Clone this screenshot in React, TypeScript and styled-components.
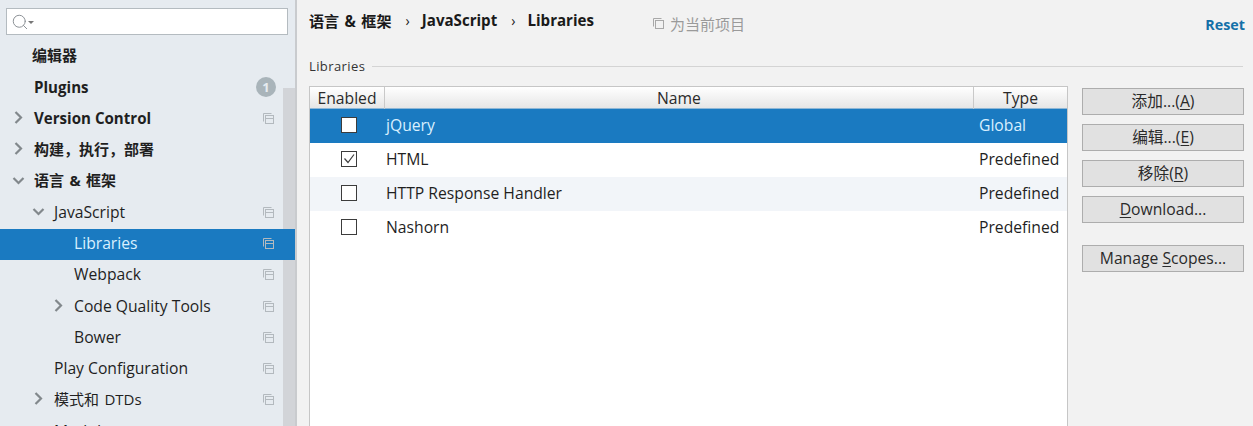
import React from 'react';
import styled, { createGlobalStyle } from 'styled-components';
import { Search } from 'lucide-react';

const GlobalStyle = createGlobalStyle`
  html, body {
    margin: 0;
    padding: 0;
    height: 100%;
    overflow: hidden;
  }
  body {
    font-family: "Open Sans", "Noto Sans", "Noto Sans CJK SC", sans-serif;
    font-size: 15.7px;
    color: #1a1a1a;
  }
`;

const Page = styled.div`
  display: flex;
  width: 1253px;
  height: 426px;
  overflow: hidden;
  background: #f2f2f2;
`;

const Sidebar = styled.aside`
  position: relative;
  width: 295px;
  flex: none;
  height: 426px;
  overflow: hidden;
  background: #e6ebf0;
  border-right: 2px solid #c9cbce;
`;

const SearchBox = styled.div`
  display: flex;
  align-items: center;
  box-sizing: border-box;
  width: 282px;
  height: 27px;
  margin: 8px 0 6px 6px;
  padding-left: 4px;
  background: #fff;
  border: 1px solid #b4bbc0;
  color: #8a8f94;
`;

const Caret = styled.span`
  width: 0;
  height: 0;
  margin-left: -1px;
  margin-top: 2px;
  border-left: 3px solid transparent;
  border-right: 3px solid transparent;
  border-top: 3px solid #777;
`;

const Tree = styled.div`
  display: grid;
  grid-auto-rows: 31.25px;
`;

const TreeRow = styled.div<{ $depth: number; $selected?: boolean }>`
  position: relative;
  box-sizing: border-box;
  display: flex;
  align-items: center;
  padding-left: ${p => 34 + p.$depth * 20}px;
  padding-bottom: 2px;
  background: ${p => (p.$selected ? '#1a7ac1' : 'transparent')};
  color: ${p => (p.$selected ? '#d9f0ff' : '#1f1f1f')};
  z-index: ${p => (p.$selected ? 2 : 1)};
`;

const TreeLabel = styled.span<{ $bold?: boolean; $cjk?: boolean; $outdent?: number }>`
  margin-left: ${p => -(p.$outdent ?? 0)}px;
  margin-bottom: ${p => (p.$cjk ? 2 : 0)}px;
  font-weight: ${p => (p.$bold ? 700 : 400)};
  font-size: ${p => (p.$cjk ? '15px' : p.$bold ? '15.1px' : 'inherit')};
  word-spacing: ${p => (p.$cjk ? '1.5px' : 'normal')};
  color: inherit;
  white-space: nowrap;
`;

const Arrow = styled.svg<{ $depth: number }>`
  position: absolute;
  left: ${p => 12 + p.$depth * 20}px;
  top: 50%;
  width: 13px;
  height: 13px;
  margin-top: -8px;
  fill: none;
  stroke: #82888c;
  stroke-width: 2.2;
`;

const CopyMark = styled.svg`
  position: absolute;
  right: 21px;
  top: 50%;
  width: 11px;
  height: 11px;
  margin-top: -6px;
  fill: none;
  stroke: #b3b9be;
  stroke-width: 1;
`;

const Badge = styled.span`
  position: absolute;
  right: 19px;
  top: 50%;
  display: flex;
  align-items: center;
  justify-content: center;
  width: 20px;
  height: 20px;
  margin-top: -11px;
  border-radius: 50%;
  background: #a9b4ba;
  color: #e6ebf0;
  font-size: 13px;
  font-weight: 700;
`;

const ScrollTrack = styled.div`
  position: absolute;
  right: 0;
  top: 88px;
  bottom: 0;
  width: 12px;
  background: #d2d4d8;
`;

const Main = styled.main`
  flex: 1;
  min-width: 0;
  display: flex;
  flex-direction: column;
  padding: 0 8px 0 12px;
`;

const TopBar = styled.div`
  display: flex;
  align-items: flex-start;
  height: 57px;
  flex: none;
`;

const Crumbs = styled.div`
  display: flex;
  align-items: center;
  width: 344px;
  height: 40px;
  font-size: 15.1px;
  font-weight: 700;
  word-spacing: 1.5px;
  color: #1a1a1a;
`;

const CrumbSep = styled.span`
  margin: 0 12px 0 14px;
  font-weight: 400;
  font-size: 14px;
`;

const ProjectHint = styled.div`
  display: flex;
  align-items: center;
  gap: 6px;
  height: 47px;
  font-size: 15px;
  color: #9a9a9a;
`;

const HintMark = styled.svg`
  width: 11px;
  height: 11px;
  fill: none;
  stroke: #a8a8a8;
`;

const ResetLink = styled.a`
  margin-left: auto;
  line-height: 50px;
  font-size: 14.3px;
  font-weight: 700;
  color: #1470a8;
`;

const SectionTitle = styled.div`
  display: flex;
  align-items: center;
  gap: 7px;
  height: 18px;
  margin-bottom: 11px;
  margin-right: 2px;
  flex: none;
  font-size: 13px;
  letter-spacing: 0.4px;
  color: #333;

  &::after {
    content: '';
    flex: 1;
    height: 1px;
    background: #d4d4d4;
  }
`;

const Content = styled.div`
  flex: 1;
  min-height: 0;
  display: flex;
  gap: 14px;
`;

const TablePanel = styled.div`
  box-sizing: border-box;
  width: 759px;
  flex: none;
  background: #fff;
  border: 1px solid #c6c6c6;
  border-bottom: none;
`;

const Columns = styled.div`
  display: grid;
  grid-template-columns: 75px 589px 1fr;
`;

const HeaderRow = styled(Columns)`
  box-sizing: border-box;
  height: 22px;
  background: linear-gradient(#ffffff, #e6e6e6);
  border-bottom: 1px solid #8fb7d6;
`;

const HeaderCell = styled.div<{ $last?: boolean }>`
  position: relative;
  text-align: center;
  line-height: 22px;
  color: #2a2a2a;
  border-right: ${p => (p.$last ? 'none' : '1px solid #c9c9c9')};
`;

const BodyRow = styled(Columns)<{ $selected?: boolean; $striped?: boolean }>`
  box-sizing: border-box;
  height: 34px;
  padding-bottom: 2px;
  align-items: center;
  background: ${p => (p.$selected ? '#1a7ac1' : p.$striped ? '#f2f5f9' : '#fff')};
  color: ${p => (p.$selected ? '#d9f0ff' : '#1f1f1f')};
`;

const CheckCell = styled.div`
  display: flex;
  justify-content: center;
  padding-left: 3px;
`;

const CheckBox = styled.span`
  display: flex;
  box-sizing: border-box;
  width: 16px;
  height: 16px;
  background: #fff;
  border: 1px solid #3c3c3c;
  color: #3c3c3c;
`;

const NameCell = styled.div`
  padding-left: 1px;
`;

const TypeCell = styled.div`
  padding-left: 5px;
`;

const Buttons = styled.div`
  flex: 1;
  display: flex;
  flex-direction: column;
  align-items: stretch;
  padding-top: 2px;
  margin-right: 1px;
`;

const ActionButton = styled.button<{ $gap: number }>`
  box-sizing: border-box;
  height: 27px;
  margin-bottom: ${p => p.$gap}px;
  padding: 0 0 2px;
  background: #e1e1e1;
  border: 1px solid #adadad;
  font: inherit;
  line-height: 20px;
  color: #2a2a2a;

  u {
    text-underline-offset: 2px;
  }
`;

const CopyIcon = () => (
  <CopyMark viewBox="0 0 11 11">
    <path d="M0.5 8.5V0.5H8.5" />
    <rect x="2.5" y="2.5" width="8" height="8" />
    <path d="M2.5 5.5H10.5" />
  </CopyMark>
);

const TreeArrow = ({ depth, open }: { depth: number; open: boolean }) => (
  <Arrow $depth={depth} viewBox="0 0 13 13">
    {open ? <path d="M1.5 4L6.5 9L11.5 4" /> : <path d="M3.5 1L9 6.5L3.5 12" />}
  </Arrow>
);

interface TreeItem {
  label: string;
  depth: number;
  bold?: boolean;
  cjk?: boolean;
  outdent?: number;
  open?: boolean;
  selected?: boolean;
  mark?: boolean;
  badge?: string;
}

const treeItems: TreeItem[] = [
  { label: '编辑器', depth: 0, bold: true, cjk: true, outdent: 2 },
  { label: 'Plugins', depth: 0, bold: true, badge: '1' },
  { label: 'Version Control', depth: 0, bold: true, open: false, mark: true },
  { label: '构建，执行，部署', depth: 0, bold: true, cjk: true, open: false },
  { label: '语言 & 框架', depth: 0, bold: true, cjk: true, open: true },
  { label: 'JavaScript', depth: 1, open: true, mark: true },
  { label: 'Libraries', depth: 2, selected: true, mark: true },
  { label: 'Webpack', depth: 2, mark: true },
  { label: 'Code Quality Tools', depth: 2, open: false, mark: true },
  { label: 'Bower', depth: 2, mark: true },
  { label: 'Play Configuration', depth: 1, mark: true },
  { label: '模式和 DTDs', depth: 1, cjk: true, open: false, mark: true },
  { label: 'Markdown', depth: 1, mark: true },
];

const libraries = [
  { name: 'jQuery', type: 'Global', checked: false, selected: true },
  { name: 'HTML', type: 'Predefined', checked: true },
  { name: 'HTTP Response Handler', type: 'Predefined', checked: false, striped: true },
  { name: 'Nashorn', type: 'Predefined', checked: false },
];

const App: React.FC = () => {
  return (
    <Page>
      <GlobalStyle />
      <Sidebar>
        <ScrollTrack />
        <SearchBox>
          <Search size={18} strokeWidth={1.3} />
          <Caret />
        </SearchBox>
        <Tree>
          {treeItems.map(item => (
            <TreeRow key={item.label} $depth={item.depth} $selected={item.selected}>
              {item.open !== undefined && <TreeArrow depth={item.depth} open={item.open} />}
              <TreeLabel $bold={item.bold} $cjk={item.cjk} $outdent={item.outdent}>{item.label}</TreeLabel>
              {item.mark && <CopyIcon />}
              {item.badge && <Badge>{item.badge}</Badge>}
            </TreeRow>
          ))}
        </Tree>
      </Sidebar>
      <Main>
        <TopBar>
          <Crumbs>
            语言 & 框架<CrumbSep>›</CrumbSep>JavaScript<CrumbSep>›</CrumbSep>Libraries
          </Crumbs>
          <ProjectHint>
            <HintMark viewBox="0 0 11 11">
              <path d="M0.5 8.5V0.5H8.5" />
              <rect x="2.5" y="2.5" width="8" height="8" />
            </HintMark>
            为当前项目
          </ProjectHint>
          <ResetLink>Reset</ResetLink>
        </TopBar>
        <SectionTitle>Libraries</SectionTitle>
        <Content>
          <TablePanel>
            <HeaderRow>
              <HeaderCell>Enabled</HeaderCell>
              <HeaderCell>Name</HeaderCell>
              <HeaderCell $last>Type</HeaderCell>
            </HeaderRow>
            {libraries.map(lib => (
              <BodyRow key={lib.name} $selected={lib.selected} $striped={lib.striped}>
                <CheckCell>
                  <CheckBox>
                    {lib.checked && (
                      <svg viewBox="0 0 14 14" width="14" height="14" fill="none" stroke="currentColor" strokeWidth="1.2">
                        <path d="M2.5 6.5L6 10.5L12 2.5" />
                      </svg>
                    )}
                  </CheckBox>
                </CheckCell>
                <NameCell>{lib.name}</NameCell>
                <TypeCell>{lib.type}</TypeCell>
              </BodyRow>
            ))}
          </TablePanel>
          <Buttons>
            <ActionButton $gap={9}>添加...(<u>A</u>)</ActionButton>
            <ActionButton $gap={9}>编辑...(<u>E</u>)</ActionButton>
            <ActionButton $gap={9}>移除(<u>R</u>)</ActionButton>
            <ActionButton $gap={22}><u>D</u>ownload...</ActionButton>
            <ActionButton $gap={0}>Manage <u>S</u>copes...</ActionButton>
          </Buttons>
        </Content>
      </Main>
    </Page>
  );
};

export default App;
